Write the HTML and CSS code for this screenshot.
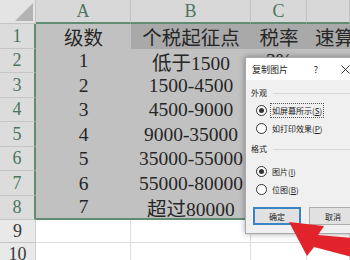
FILE: index.html
```html
<!DOCTYPE html>
<html lang="zh-CN">
<head>
    <meta charset="UTF-8">
    <title>复制图片</title>
    <link rel="stylesheet" href="styles.css">
</head>
<body>
    <div class="sheet">
        <div class="corner"><span class="corner-tri"></span></div>
        <div class="col-head">A</div>
        <div class="col-head">B</div>
        <div class="col-head">C</div>
        <div class="col-head"></div>

        <div class="row-head">1</div>
        <div class="cell">级数</div>
        <div class="cell hl">个税起征点</div>
        <div class="cell hl">税率</div>
        <div class="cell hl left"><span class="spill">速算</span></div>

        <div class="row-head">2</div>
        <div class="cell">1</div>
        <div class="cell">低于1500</div>
        <div class="cell">3%</div>
        <div class="cell"></div>

        <div class="row-head">3</div>
        <div class="cell">2</div>
        <div class="cell">1500-4500</div>
        <div class="cell"></div>
        <div class="cell"></div>

        <div class="row-head">4</div>
        <div class="cell">3</div>
        <div class="cell">4500-9000</div>
        <div class="cell"></div>
        <div class="cell"></div>

        <div class="row-head">5</div>
        <div class="cell">4</div>
        <div class="cell">9000-35000</div>
        <div class="cell"></div>
        <div class="cell"></div>

        <div class="row-head">6</div>
        <div class="cell">5</div>
        <div class="cell">35000-55000</div>
        <div class="cell"></div>
        <div class="cell"></div>

        <div class="row-head">7</div>
        <div class="cell">6</div>
        <div class="cell">55000-80000</div>
        <div class="cell"></div>
        <div class="cell"></div>

        <div class="row-head">8</div>
        <div class="cell last">7</div>
        <div class="cell last">超过80000</div>
        <div class="cell last"></div>
        <div class="cell last"></div>

        <div class="row-head plain">9</div>
        <div class="cell empty"></div>
        <div class="cell empty"></div>
        <div class="cell empty"></div>
        <div class="cell empty"></div>

        <div class="row-head plain">10</div>
        <div class="cell empty"></div>
        <div class="cell empty"></div>
        <div class="cell empty"></div>
        <div class="cell empty"></div>
    </div>

    <div class="dialog">
        <div class="dialog-title">
            <span class="title-text">复制图片</span>
            <span class="help">?</span>
            <span class="close">
                <svg width="9" height="9" viewBox="0 0 9 9"><path d="M0.5 0.5L8.5 8.5M8.5 0.5L0.5 8.5" stroke="#333" stroke-width="1"/></svg>
            </span>
        </div>
        <div class="dialog-body">
            <div class="group">外观</div>
            <div class="radio"><span class="dot on"></span><span class="label focus">如屏幕所示(<u>S</u>)</span></div>
            <div class="radio"><span class="dot"></span><span class="label">如打印效果(<u>P</u>)</span></div>
            <div class="group second">格式</div>
            <div class="radio third"><span class="dot on"></span><span class="label">图片(<u>I</u>)</span></div>
            <div class="radio"><span class="dot"></span><span class="label">位图(<u>B</u>)</span></div>
            <div class="buttons">
                <div class="btn primary">确定</div>
                <div class="btn">取消</div>
            </div>
        </div>
    </div>

    <svg class="arrow" width="350" height="260" viewBox="0 0 350 260">
        <polygon points="289,222 324,226 318,235 352,238 352,257 314,247 307,256" fill="#e3232b"/>
    </svg>
</body>
</html>
```

FILE: styles.css
```css
body {
    margin: 0;
    width: 350px;
    height: 260px;
    overflow: hidden;
    position: relative;
    background-color: #fff;
    font-family: "Liberation Serif", "Noto Sans CJK SC", serif;
}

.sheet {
    display: grid;
    grid-template-columns: 36px 95px 120px 56px 43px;
    grid-template-rows: 24px 25px 24px 25px 24px 25px 24px 25px 24px 23px 23px;
}

.corner {
    background-color: #e4e4e4;
    border-right: 1px solid #c4c4c4;
    border-bottom: 1px solid #c4c4c4;
    box-sizing: border-box;
    display: flex;
    justify-content: flex-end;
    align-items: flex-end;
    padding: 0 2px 2px 0;
}

.corner-tri {
    width: 0;
    height: 0;
    border-left: 18px solid transparent;
    border-bottom: 18px solid #b3b3b3;
}

.col-head {
    background-color: #d8d8d8;
    border-right: 1px solid #c2c2c2;
    border-bottom: 2px solid #5f8c72;
    box-sizing: border-box;
    color: #4c7660;
    font-size: 18px;
    display: flex;
    align-items: center;
    justify-content: center;
}

.row-head {
    background-color: #dcdcdc;
    border-right: 2px solid #5f8c72;
    border-bottom: 1px solid #c6c6c6;
    box-sizing: border-box;
    color: #4c7660;
    font-size: 18px;
    display: flex;
    align-items: center;
    justify-content: center;
}

.row-head.plain {
    background-color: #e9e9e9;
    border-right: 1px solid #cfcfcf;
    color: #3a3a3a;
}

.cell {
    background-color: #c1c1c1;
    color: #262626;
    font-size: 19.5px;
    box-sizing: border-box;
    display: flex;
    align-items: center;
    justify-content: center;
    white-space: nowrap;
}

.cell.hl {
    background-color: #a9a9a9;
}

.cell.left {
    justify-content: flex-start;
}

.spill {
    margin-left: 8px;
}

.cell.last {
    border-bottom: 2px solid #5f8c72;
}

.cell.empty {
    background-color: #fff;
    border-right: 1px solid #dedede;
    border-bottom: 1px solid #dedede;
}

.dialog {
    position: absolute;
    left: 245px;
    top: 57px;
    width: 125px;
    background-color: #f0f0f0;
    border: 1px solid #a8a8a8;
    box-shadow: 0 0 6px rgba(0, 0, 0, 0.35);
    font-family: "Noto Sans CJK SC", "Liberation Sans", sans-serif;
    color: #222;
}

.dialog-title {
    height: 22px;
    background-color: #fff;
    display: flex;
    align-items: center;
    padding-left: 6px;
    font-size: 9px;
}

.title-text {
    width: 55px;
}

.help {
    width: 18px;
    text-align: center;
}

.close {
    width: 20px;
    margin-left: 10px;
    display: flex;
    justify-content: center;
}

.dialog-body {
    padding: 0 0 8px 5px;
    font-size: 8px;
}

.group {
    margin-top: 7px;
    height: 12px;
    line-height: 12px;
    display: flex;
    align-items: center;
}

.group::after {
    content: "";
    flex: 1;
    height: 1px;
    background-color: #d9d9d9;
    margin-left: 6px;
}

.group.second {
    margin-top: 7px;
}

.radio {
    height: 16px;
    margin-top: 2px;
    display: flex;
    align-items: center;
    padding-left: 5px;
}

.group + .radio {
    margin-top: 3px;
}

.group + .radio.third {
    margin-top: 8px;
}

.dot {
    width: 11px;
    height: 11px;
    box-sizing: border-box;
    border: 1px solid #333;
    border-radius: 50%;
    background-color: #fff;
    display: flex;
    align-items: center;
    justify-content: center;
}

.dot.on::after {
    content: "";
    width: 5px;
    height: 5px;
    border-radius: 50%;
    background-color: #333;
}

.label {
    margin-left: 3px;
    padding: 1px 1px;
    border: 1px solid transparent;
    line-height: 11px;
}

.label.focus {
    border: 1px dotted #555;
}

.buttons {
    display: flex;
    gap: 8px;
    margin-top: 10px;
    padding-left: 2px;
}

.btn {
    width: 48px;
    height: 18px;
    box-sizing: border-box;
    background-color: #e1e1e1;
    border: 1px solid #adadad;
    display: flex;
    align-items: center;
    justify-content: center;
}

.btn.primary {
    border: 2px solid #3a83c4;
}

.arrow {
    position: absolute;
    left: 0;
    top: 0;
    pointer-events: none;
}
```
